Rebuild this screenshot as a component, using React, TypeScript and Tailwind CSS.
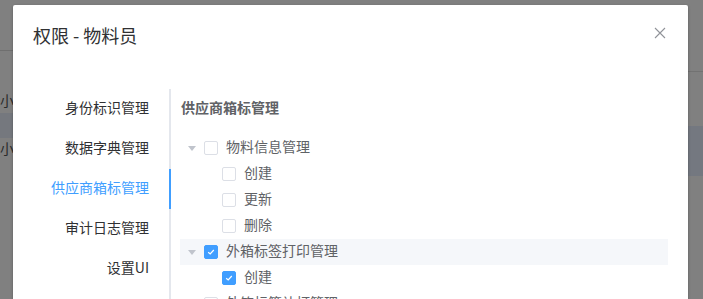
import React from 'react';

const font = { fontFamily: '"Noto Sans CJK SC", "Noto Sans", sans-serif' };

type Node = { label: string; level: number; checked: boolean; expandable?: boolean; current?: boolean };

const tabs = ['身份标识管理', '数据字典管理', '供应商箱标管理', '审计日志管理', '设置UI'];

const nodes: Node[] = [
  { label: '物料信息管理', level: 1, checked: false, expandable: true },
  { label: '创建', level: 2, checked: false },
  { label: '更新', level: 2, checked: false },
  { label: '删除', level: 2, checked: false },
  { label: '外箱标签打印管理', level: 1, checked: true, expandable: true, current: true },
  { label: '创建', level: 2, checked: true },
  { label: '外箱标签补打管理', level: 1, checked: false, expandable: true },
];

function Checkbox({ checked }: { checked: boolean }) {
  return checked ? (
    <span className="mr-2 flex h-[14px] w-[14px] items-center justify-center rounded-[2px] border border-[#409eff] bg-[#409eff]">
      <svg width="10" height="10" viewBox="0 0 10 10" fill="none">
        <path d="M2.2 5.2 L4.2 7 L7.8 3" stroke="white" strokeWidth="1.2" />
      </svg>
    </span>
  ) : (
    <span className="mr-2 h-[14px] w-[14px] rounded-[2px] border border-[#dcdfe6] bg-white" />
  );
}

function TreeRow({ node }: { node: Node }) {
  return (
    <div
      className={`flex h-[26px] items-center text-[14px] text-[#606266] ${node.current ? 'bg-[#f5f7fa]' : ''}`}
      style={{ paddingLeft: (node.level - 1) * 18 }}
    >
      <span className="flex h-6 w-6 items-center justify-center">
        {node.expandable && (
          <svg width="8" height="5" viewBox="0 0 8 5">
            <path d="M0 0 L8 0 L4 5 Z" fill="#c0c4cc" />
          </svg>
        )}
      </span>
      <Checkbox checked={node.checked} />
      <span className="whitespace-nowrap leading-[20px] -translate-y-[2px]">{node.label}</span>
    </div>
  );
}

export default function App() {
  return (
    <div className="relative h-[299px] w-[703px] overflow-hidden bg-[#808080]" style={font}>
      {/* page behind the mask */}
      <div className="flex h-full justify-between">
        <div className="w-[13px] overflow-hidden whitespace-nowrap text-[14px] text-[#2a2a2a]">
          <div className="h-[51px] border-b border-[#6f6f6f]" />
          <div className="h-[62px] pt-[38px] leading-[22px]">小组</div>
          <div className="h-[25px] bg-[#75787e]" />
          <div className="leading-[20px]">小组</div>
        </div>
        <div className="w-[15px]">
          <div className="h-[72px] border-b border-[#727272]" />
          <div className="h-[54px]" />
          <div className="h-[50px] bg-[#747880]" />
        </div>
      </div>

      {/* dialog */}
      <div className="absolute left-[13px] top-[5px] h-[320px] w-[675px] rounded-[2px] bg-white shadow-[0_1px_3px_rgba(0,0,0,0.3)]">
        <div className="relative h-[54px] px-5 pt-[18px]">
          <span className="text-[18px] leading-[24px] text-[#303133]">权限 - 物料员</span>
          <button className="absolute right-5 top-5 flex h-4 w-4 items-center justify-center">
            <svg width="12" height="12" viewBox="0 0 12 12">
              <path d="M1 1 L11 11 M11 1 L1 11" stroke="#909399" strokeWidth="1.1" />
            </svg>
          </button>
        </div>

        <div className="flex px-5 pt-[30px]">
          <div className="w-[138px] border-r-2 border-[#e4e7ed]">
            {tabs.map((t, i) => (
              <div
                key={t}
                className={`relative h-10 pr-5 text-right text-[14px] leading-[36px] ${i === 2 ? 'text-[#409eff]' : 'text-[#303133]'}`}
              >
                {t}
                {i === 2 && <span className="absolute right-[-2px] top-0 h-10 w-[2px] bg-[#409eff]" />}
              </div>
            ))}
          </div>
          <div className="flex-1 pl-[9px]">
            <div className="h-10 pl-[1px] text-[14px] font-bold leading-[36px] text-[#606266]">供应商箱标管理</div>
            <div className="pt-[6px]">
              {nodes.map((n, i) => (
                <TreeRow key={i} node={n} />
              ))}
            </div>
          </div>
        </div>
      </div>
    </div>
  );
}
